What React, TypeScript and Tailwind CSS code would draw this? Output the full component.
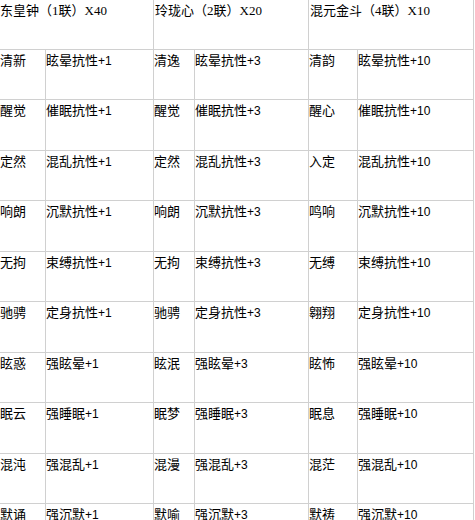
const header = ['东皇钟（1联）X40', '玲珑心（2联）X20', '混元金斗（4联）X10']

const rows: string[][] = [
  ['清新', '眩晕抗性+1', '清逸', '眩晕抗性+3', '清韵', '眩晕抗性+10'],
  ['醒觉', '催眠抗性+1', '醒觉', '催眠抗性+3', '醒心', '催眠抗性+10'],
  ['定然', '混乱抗性+1', '定然', '混乱抗性+3', '入定', '混乱抗性+10'],
  ['响朗', '沉默抗性+1', '响朗', '沉默抗性+3', '鸣响', '沉默抗性+10'],
  ['无拘', '束缚抗性+1', '无拘', '束缚抗性+3', '无缚', '束缚抗性+10'],
  ['驰骋', '定身抗性+1', '驰骋', '定身抗性+3', '翱翔', '定身抗性+10'],
  ['眩惑', '强眩晕+1', '眩泯', '强眩晕+3', '眩怖', '强眩晕+10'],
  ['眠云', '强睡眠+1', '眠梦', '强睡眠+3', '眠息', '强睡眠+10'],
  ['混沌', '强混乱+1', '混漫', '强混乱+3', '混茫', '强混乱+10'],
  ['默诵', '强沉默+1', '默喻', '强沉默+3', '默祷', '强沉默+10'],
]

const cell = 'border-r border-b border-[#d0d0d0] pt-[3px] leading-[16px] whitespace-nowrap overflow-hidden'

// splits "眩晕抗性+10" so the "+10" part can be a bit smaller, like the original
function Effect({ text }: { text: string }) {
  const i = text.indexOf('+')
  if (i < 0) return <>{text}</>
  return (
    <>
      {text.slice(0, i)}
      <span className="text-[12px]">{text.slice(i)}</span>
    </>
  )
}

export default function App() {
  return (
    <div className="bg-white w-[475px] h-[520px] overflow-hidden">
      <div
        className="ml-[-2px] mt-[-1px] w-[476px] grid grid-cols-[47px_108px_41px_114px_49px_116px] border-l border-t border-[#d0d0d0] text-[13px] text-black"
        style={{ fontFamily: '"Liberation Sans", "Noto Sans CJK SC", sans-serif' }}
      >
        {header.map((h) => (
          <div
            key={h}
            className={`${cell} col-span-2 h-[50px] pl-[1px]`}
            style={{ fontFamily: '"Liberation Serif", "Noto Sans CJK SC", serif' }}
          >
            {h}
          </div>
        ))}
        {rows.map((r, ri) =>
          r.map((t, ci) => (
            <div
              key={ri + '-' + ci}
              className={`${cell} ${ri % 2 === 0 ? 'h-[50px]' : 'h-[51px]'} ${ci === 0 ? 'pl-[1px]' : 'pl-0'}`}
            >
              <Effect text={t} />
            </div>
          ))
        )}
      </div>
    </div>
  )
}
